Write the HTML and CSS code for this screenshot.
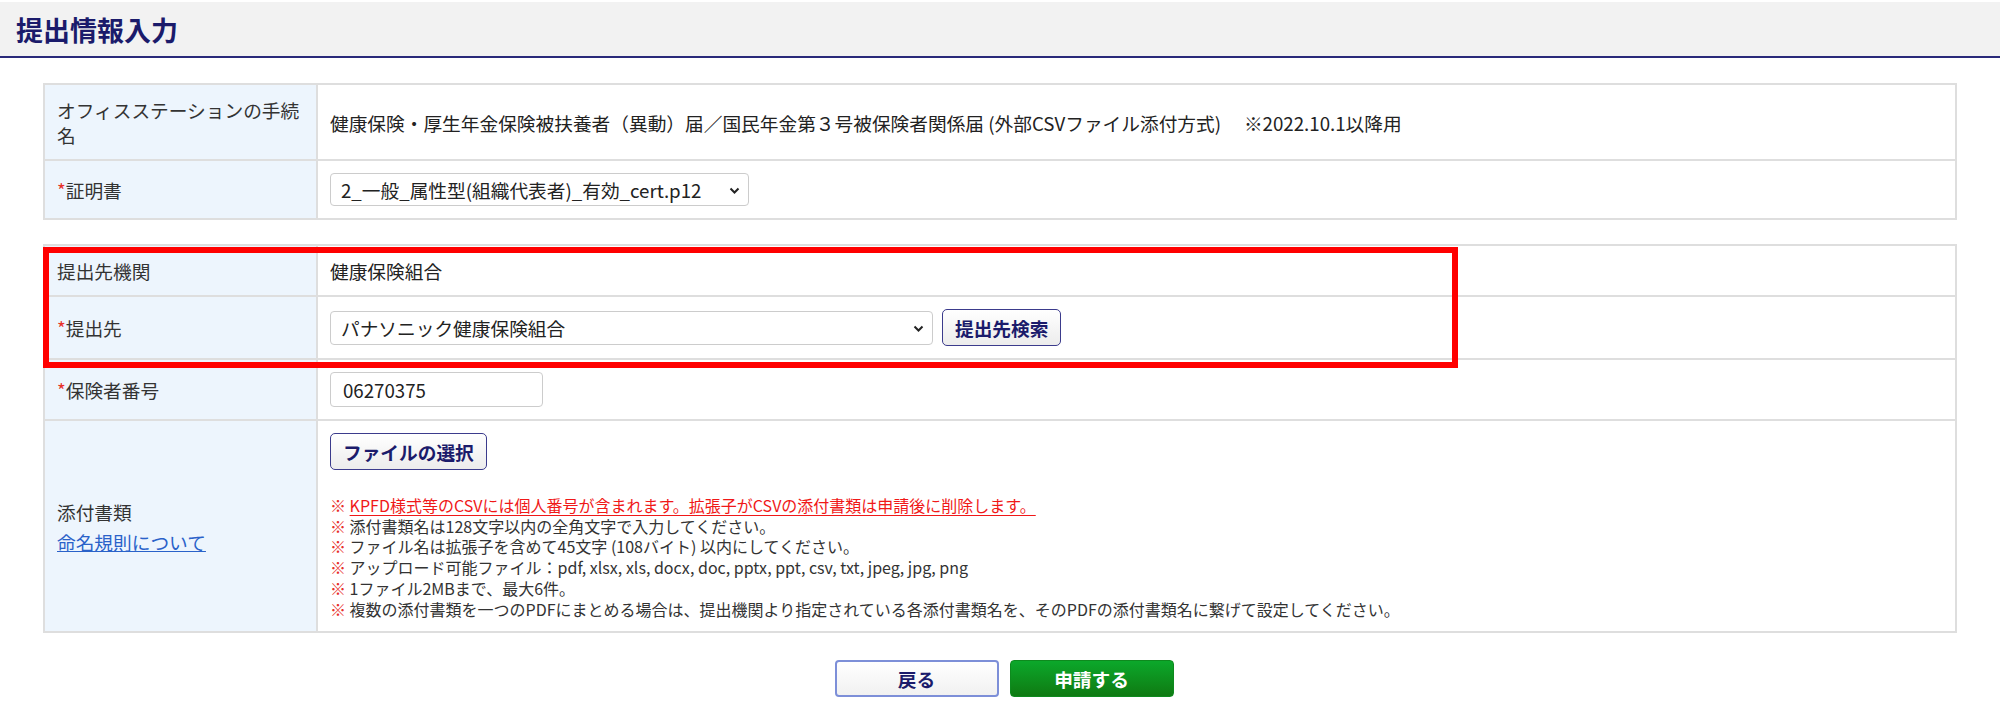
FILE: index.html
```html
<!DOCTYPE html>
<html lang="ja">
<head>
  <meta charset="UTF-8">
  <meta name="viewport" content="width=device-width, initial-scale=1.0">
  <title>提出情報入力</title>
  <link rel="stylesheet" href="styles.css">
</head>
<body>
  <header class="page-head">
    <h1>提出情報入力</h1>
  </header>
  <main class="content">
    <table class="form-table">
      <colgroup><col class="col-label"><col></colgroup>
      <tr>
        <th>オフィスステーションの手続名</th>
        <td>健康保険・厚生年金保険被扶養者（異動）届／国民年金第３号被保険者関係届 (外部CSVファイル添付方式)　 ※2022.10.1以降用</td>
      </tr>
      <tr>
        <th><span class="req">*</span>証明書</th>
        <td>
          <span class="select-wrap sel-cert">
            <select><option>2_一般_属性型(組織代表者)_有効_cert.p12</option></select>
            <svg class="chev" width="11" height="7" viewBox="0 0 11 7"><path d="M1.5 1.5l4 4 4-4" fill="none" stroke="#222" stroke-width="2"/></svg>
          </span>
        </td>
      </tr>
    </table>

    <div class="table-block">
      <table class="form-table">
        <colgroup><col class="col-label"><col></colgroup>
        <tr>
          <th>提出先機関</th>
          <td>健康保険組合</td>
        </tr>
        <tr>
          <th><span class="req">*</span>提出先</th>
          <td>
            <div class="inline-row">
              <span class="select-wrap sel-dest">
                <select><option>パナソニック健康保険組合</option></select>
                <svg class="chev" width="11" height="7" viewBox="0 0 11 7"><path d="M1.5 1.5l4 4 4-4" fill="none" stroke="#222" stroke-width="2"/></svg>
              </span>
              <button class="btn-sub">提出先検索</button>
            </div>
          </td>
        </tr>
        <tr>
          <th><span class="req">*</span>保険者番号</th>
          <td><input class="txt-insurer" type="text" value="06270375"></td>
        </tr>
        <tr>
          <th>
            添付書類
            <a href="#" class="rule-link">命名規則について</a>
          </th>
          <td>
            <button class="btn-sub">ファイルの選択</button>
            <ul class="notes">
              <li><span class="kome">※</span> <span class="warn">KPFD様式等のCSVには個人番号が含まれます。拡張子がCSVの添付書類は申請後に削除します。 </span></li>
              <li><span class="kome">※</span> 添付書類名は128文字以内の全角文字で入力してください。</li>
              <li><span class="kome">※</span> ファイル名は拡張子を含めて45文字 (108バイト) 以内にしてください。</li>
              <li><span class="kome">※</span> アップロード可能ファイル：pdf, xlsx, xls, docx, doc, pptx, ppt, csv, txt, jpeg, jpg, png</li>
              <li><span class="kome">※</span> 1ファイル2MBまで、最大6件。</li>
              <li><span class="kome">※</span> 複数の添付書類を一つのPDFにまとめる場合は、提出機関より指定されている各添付書類名を、そのPDFの添付書類名に繋げて設定してください。</li>
            </ul>
          </td>
        </tr>
      </table>
      <div class="highlight"></div>
    </div>

    <div class="actions">
      <button class="btn-back">戻る</button>
      <button class="btn-submit">申請する</button>
    </div>
  </main>
</body>
</html>
```

FILE: styles.css
```css
:root{--navy:#1b1b6b;--line:#dedede;--label-bg:#edf5fd;--red:#e8302a}
body{margin:0;font-family:"Noto Sans CJK JP",sans-serif;font-size:18.7px;color:#222;background:#fff}
.page-head{margin-top:2px;height:54px;background:#f2f2f2;border-bottom:2px solid #2a2a7a;display:flex;align-items:center;padding-left:16px}
.page-head h1{margin:0;font-size:27px;line-height:1;font-weight:bold;color:var(--navy)}
.content{padding:25px 43px 0}
.form-table{width:100%;border-collapse:collapse;table-layout:fixed;background:#fff}
.form-table th,.form-table td{border:2px solid var(--line);padding:12px;line-height:25px;vertical-align:middle;text-align:left}
.form-table th{background:var(--label-bg);font-weight:normal;color:#333}
.col-label{width:273px}
.req{color:var(--red)}
.table-block{position:relative;margin-top:24px}
.highlight{position:absolute;top:3px;left:0;width:1403px;height:109px;border:6px solid #f00;pointer-events:none}
.select-wrap{position:relative;display:inline-block;vertical-align:middle}
.select-wrap select{appearance:none;-webkit-appearance:none;font:inherit;color:#222;background:#fff;border:1px solid #ccc;border-radius:4px;padding:0 30px 0 10px;line-height:26px;margin:0}
.select-wrap .chev{position:absolute;top:50%;right:9px;margin-top:-3px}
.sel-cert select{width:419px;height:33px}
.sel-dest select{width:603px;height:34px}
.inline-row{display:flex;align-items:center;gap:9px}
.btn-sub{font:inherit;font-weight:bold;color:var(--navy);background:linear-gradient(#fff,#ececec);border:1.5px solid #3b3b8c;border-radius:5px;padding:0 12px;height:37px;line-height:26px;cursor:pointer}
.txt-insurer{font:inherit;color:#222;width:213px;height:35px;box-sizing:border-box;border:1px solid #ccc;border-radius:4px;padding:0 12px;margin:0;vertical-align:middle}
.rule-link{display:block;margin-top:5px;color:#2a62c9}
.notes{list-style:none;margin:25px 0 0;padding:0;font-size:16px;line-height:20.7px;color:#333}
.kome{color:var(--red)}
.warn{color:#f01818;text-decoration:underline;text-underline-offset:3px}
.actions{display:flex;justify-content:center;gap:11px;margin-top:27px;padding-left:8px}
.actions button{width:164px;height:37px;font:inherit;font-weight:bold;border-radius:4px;cursor:pointer}
.btn-back{color:var(--navy);background:linear-gradient(#fff,#f1f1f1);border:2px solid #7d8fd8}
.btn-submit{color:#fff;background:linear-gradient(#0ca82b,#0f7a12);border:1px solid #0e8a1e}
```
